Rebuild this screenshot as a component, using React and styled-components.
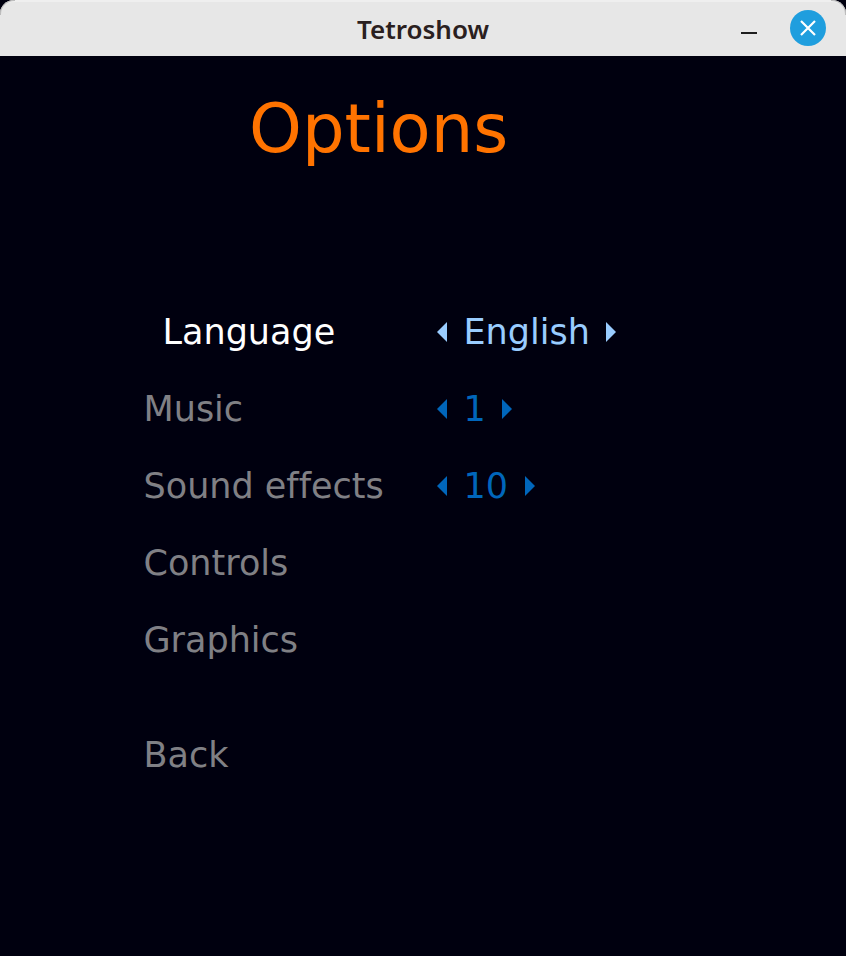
import styled, { createGlobalStyle } from 'styled-components';

const GlobalStyle = createGlobalStyle`
  html, body {
    margin: 0;
    padding: 0;
    background: #fff;
  }
`;

const rows = [
  { label: 'Language', value: 'English', selected: true },
  { label: 'Music', value: '1' },
  { label: 'Sound effects', value: '10' },
  { label: 'Controls' },
  { label: 'Graphics' },
];

function App() {
  return (
    <Window>
      <GlobalStyle />
      <TitleBar>
        <TitleText>Tetroshow</TitleText>
        <WindowButtons>
          <MinimizeButton />
          <CloseButton>
            <svg width="16" height="16" viewBox="0 0 16 16">
              <path d="M1 1L15 15M15 1L1 15" stroke="#fff" strokeWidth="2.2" fill="none" />
            </svg>
          </CloseButton>
        </WindowButtons>
      </TitleBar>
      <Screen>
        <Heading>Options</Heading>
        <Menu>
          {rows.map((row) => (
            <Row key={row.label}>
              <Label $selected={row.selected}>{row.label}</Label>
              {row.value && (
                <Spinner $selected={row.selected}>
                  <Arrow width="10" height="20" viewBox="0 0 10 20">
                    <path d="M10 0V20L0 10Z" fill="currentColor" />
                  </Arrow>
                  <span>{row.value}</span>
                  <Arrow width="10" height="20" viewBox="0 0 10 20">
                    <path d="M0 0V20L10 10Z" fill="currentColor" />
                  </Arrow>
                </Spinner>
              )}
            </Row>
          ))}
          <BackRow>
            <Label>Back</Label>
          </BackRow>
        </Menu>
      </Screen>
    </Window>
  );
}

const Window = styled.div`
  width: 846px;
  height: 956px;
  display: flex;
  flex-direction: column;
  overflow: hidden;
  background: #00000f;
`;

const TitleBar = styled.header`
  position: relative;
  flex: none;
  height: 56px;
  box-sizing: border-box;
  display: flex;
  align-items: center;
  justify-content: center;
  background: #e7e7e7;
  border-top: 2px solid #efefef;
  border-radius: 14px 14px 0 0;

  &::before,
  &::after {
    content: '';
    position: absolute;
    top: -2px;
    width: 14px;
    height: 14px;
    border-top: 1px solid #bcbcbc;
  }

  &::before {
    left: 0;
    border-left: 1px solid #bcbcbc;
    border-top-left-radius: 14px;
  }

  &::after {
    right: 0;
    border-right: 1px solid #bcbcbc;
    border-top-right-radius: 14px;
  }
`;

const TitleText = styled.div`
  font-family: "Noto Sans", "Open Sans", sans-serif;
  font-weight: 600;
  font-size: 26px;
  color: #2a2020;
`;

const WindowButtons = styled.div`
  position: absolute;
  right: 20px;
  top: 8px;
  display: flex;
  align-items: center;
  gap: 33px;
`;

const MinimizeButton = styled.div`
  width: 16px;
  height: 2px;
  background: #1e1e1e;
  margin-top: 10px;
`;

const CloseButton = styled.div`
  width: 36px;
  height: 36px;
  border-radius: 50%;
  background: #1f9ede;
  display: flex;
  align-items: center;
  justify-content: center;
`;

const Screen = styled.main`
  flex: 1;
  display: flex;
  flex-direction: column;
  font-family: "DejaVu Sans", sans-serif;
  font-variant-ligatures: none;
`;

const Heading = styled.h1`
  margin: 28px 0 0 249px;
  font-size: 67.2px;
  font-weight: 400;
  line-height: 90px;
  color: #ff7300;
`;

const Menu = styled.div`
  display: flex;
  flex-direction: column;
  margin-top: 119px;
  padding-left: 143.5px;
`;

const Row = styled.div`
  height: 77px;
  display: flex;
  align-items: center;
`;

const BackRow = styled(Row)`
  margin-top: 38px;
`;

const Label = styled.div`
  width: 293.5px;
  box-sizing: border-box;
  padding-left: ${(p) => (p.$selected ? '19px' : '0')};
  font-size: 35px;
  color: ${(p) => (p.$selected ? '#ffffff' : '#808085')};
`;

const Spinner = styled.div`
  display: flex;
  align-items: center;
  gap: 16.5px;
  font-size: 35px;
  color: ${(p) => (p.$selected ? '#99ccff' : '#0066bb')};
`;

const Arrow = styled.svg`
  display: block;
  flex: none;
`;

export default App;
